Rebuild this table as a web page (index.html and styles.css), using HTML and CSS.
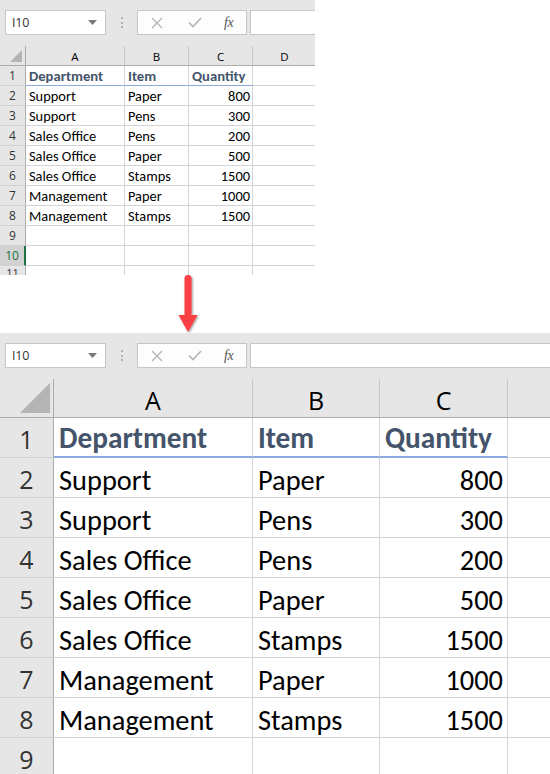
FILE: index.html
```html
<!DOCTYPE html>
<html>
<head>
<meta charset="utf-8">
<link rel="stylesheet" href="styles.css">
</head>
<body>
<div class="page">
  <section class="shot shot--small">
    <div class="toolbar">
      <div class="namebox"><span class="namebox-text">I10</span><svg class="dd" width="9" height="5" viewBox="0 0 9 5"><path d="M0 0h9L4.5 5z" fill="#7a7a7a"/></svg></div>
      <div class="grip"><i></i><i></i><i></i></div>
      <div class="fbtns">
        <svg class="ic-x" width="12" height="12" viewBox="0 0 12 12"><path d="M1 1L11 11M11 1L1 11" stroke="#b4b4b4" stroke-width="1.3" fill="none"/></svg>
        <svg class="ic-ok" width="14" height="11" viewBox="0 0 14 11"><path d="M1 5.5L5 9.5L13 1" stroke="#b4b4b4" stroke-width="1.6" fill="none"/></svg>
        <span class="fx">fx</span>
      </div>
      <div class="finput"></div>
    </div>
    <div class="sheet">
      <div class="corner"><svg class="tri" viewBox="0 0 12 12"><path d="M12 0V12H0z" fill="#b4b4b4"/></svg></div>
      <div class="ch">A</div><div class="ch">B</div><div class="ch">C</div><div class="ch">D</div>

      <div class="rh">1</div><div class="c hd">Department</div><div class="c hd">Item</div><div class="c hd">Quantity</div><div class="c"></div>
      <div class="rh">2</div><div class="c">Support</div><div class="c">Paper</div><div class="c n">800</div><div class="c"></div>
      <div class="rh">3</div><div class="c">Support</div><div class="c">Pens</div><div class="c n">300</div><div class="c"></div>
      <div class="rh">4</div><div class="c">Sales Office</div><div class="c">Pens</div><div class="c n">200</div><div class="c"></div>
      <div class="rh">5</div><div class="c">Sales Office</div><div class="c">Paper</div><div class="c n">500</div><div class="c"></div>
      <div class="rh">6</div><div class="c">Sales Office</div><div class="c">Stamps</div><div class="c n">1500</div><div class="c"></div>
      <div class="rh">7</div><div class="c">Management</div><div class="c">Paper</div><div class="c n">1000</div><div class="c"></div>
      <div class="rh">8</div><div class="c">Management</div><div class="c">Stamps</div><div class="c n">1500</div><div class="c"></div>
      <div class="rh">9</div><div class="c"></div><div class="c"></div><div class="c"></div><div class="c"></div>
      <div class="rh sel">10</div><div class="c"></div><div class="c"></div><div class="c"></div><div class="c"></div>
      <div class="rh rh--cut">11</div><div class="c"></div><div class="c"></div><div class="c"></div><div class="c"></div>
    </div>
  </section>

  <div class="arrow">
    <svg width="30" height="58" viewBox="0 0 30 58">
      <defs>
        <filter id="sh" x="-50%" y="-20%" width="200%" height="150%">
          <feGaussianBlur in="SourceAlpha" stdDeviation="1.2"/>
          <feOffset dx="0.5" dy="1"/>
          <feComponentTransfer><feFuncA type="linear" slope="0.45"/></feComponentTransfer>
          <feMerge><feMergeNode/><feMergeNode in="SourceGraphic"/></feMerge>
        </filter>
      </defs>
      <g filter="url(#sh)">
        <rect x="11.5" y="0" width="7" height="42" rx="3.5" fill="#fb3f45"/>
        <path d="M5.5 40H24.5L15 57z" fill="#fb3f45"/>
      </g>
    </svg>
  </div>

  <section class="shot shot--large">
    <div class="toolbar">
      <div class="namebox"><span class="namebox-text">I10</span><svg class="dd" width="9" height="5" viewBox="0 0 9 5"><path d="M0 0h9L4.5 5z" fill="#7a7a7a"/></svg></div>
      <div class="grip"><i></i><i></i><i></i></div>
      <div class="fbtns">
        <svg class="ic-x" width="12" height="12" viewBox="0 0 12 12"><path d="M1 1L11 11M11 1L1 11" stroke="#b4b4b4" stroke-width="1.3" fill="none"/></svg>
        <svg class="ic-ok" width="14" height="11" viewBox="0 0 14 11"><path d="M1 5.5L5 9.5L13 1" stroke="#b4b4b4" stroke-width="1.6" fill="none"/></svg>
        <span class="fx">fx</span>
      </div>
      <div class="finput"></div>
    </div>
    <div class="sheet">
      <div class="corner"><svg class="tri" viewBox="0 0 12 12"><path d="M12 0V12H0z" fill="#b4b4b4"/></svg></div>
      <div class="ch">A</div><div class="ch">B</div><div class="ch">C</div><div class="ch"></div>

      <div class="rh">1</div><div class="c hd">Department</div><div class="c hd">Item</div><div class="c hd">Quantity</div><div class="c"></div>
      <div class="rh">2</div><div class="c">Support</div><div class="c">Paper</div><div class="c n">800</div><div class="c"></div>
      <div class="rh">3</div><div class="c">Support</div><div class="c">Pens</div><div class="c n">300</div><div class="c"></div>
      <div class="rh">4</div><div class="c">Sales Office</div><div class="c">Pens</div><div class="c n">200</div><div class="c"></div>
      <div class="rh">5</div><div class="c">Sales Office</div><div class="c">Paper</div><div class="c n">500</div><div class="c"></div>
      <div class="rh">6</div><div class="c">Sales Office</div><div class="c">Stamps</div><div class="c n">1500</div><div class="c"></div>
      <div class="rh">7</div><div class="c">Management</div><div class="c">Paper</div><div class="c n">1000</div><div class="c"></div>
      <div class="rh">8</div><div class="c">Management</div><div class="c">Stamps</div><div class="c n">1500</div><div class="c"></div>
      <div class="rh">9</div><div class="c"></div><div class="c"></div><div class="c"></div><div class="c"></div>
    </div>
  </section>
</div>
</body>
</html>
```

FILE: styles.css
```css
* { box-sizing: border-box; }
html, body { margin: 0; padding: 0; background: #ffffff; }
.page { width: 550px; height: 774px; overflow: hidden; }

.shot { background: #e6e6e6; overflow: hidden; }
.shot--small { width: 315px; height: 275px; }
.shot--large { width: 550px; height: 441px; }

/* toolbar */
.toolbar {
  height: 46px;
  display: flex;
  align-items: flex-start;
  padding: 10px 0 0 5px;
}
.namebox {
  width: 101px; height: 25px;
  background: #fff;
  border: 1px solid #c6c6c6;
  display: flex; align-items: center; justify-content: space-between;
  padding: 0 8px 0 6px;
  flex: none;
}
.namebox-text {
  font-family: "Open Sans", "DejaVu Sans", sans-serif;
  font-size: 12.5px; color: #333;
  letter-spacing: -0.2px;
}
.grip {
  width: 31px; height: 25px; flex: none;
  display: flex; flex-direction: column; align-items: center; justify-content: center; gap: 2.5px;
}
.grip i { display: block; width: 2px; height: 2px; background: #b0b0b0; }
.fbtns {
  width: 110px; height: 25px; flex: none;
  background: #fdfdfd;
  border: 1px solid #c6c6c6;
  display: flex; align-items: center;
  padding: 0 0 0 13px;
}
.ic-x { margin-right: 25px; }
.ic-ok { margin-right: 22px; }
.fx {
  font-family: "Liberation Serif", serif;
  font-style: italic; font-size: 14px; color: #555;
  letter-spacing: -0.5px;
}
.finput {
  margin-left: 3px;
  width: 400px; height: 25px; flex: none;
  background: #fff; border: 1px solid #c6c6c6;
}

/* sheet grid */
.sheet {
  display: grid;
  background: #fff;
  font-family: Carlito, Calibri, Lato, sans-serif;
  color: #000;
}
.shot--small .sheet { grid-template-columns: 26px 99px 64px 64px 64px; grid-auto-rows: 20px; grid-template-rows: 20px; width: 317px; }
.shot--large .sheet { grid-template-columns: 54px 199px 127px 128px 128px; grid-auto-rows: 40px; grid-template-rows: 39px; width: 636px; }

.corner, .ch {
  background: #e6e6e6;
  border-bottom: 1px solid #ababab;
  border-right: 1px solid #c8c8c8;
  display: flex; align-items: center; justify-content: center;
  font-family: "Open Sans", "DejaVu Sans", sans-serif;
  color: #000;
}
.corner { border-right-color: #ababab; position: relative; }
.tri { position: absolute; }
.shot--small .tri { width: 12px; height: 12px; right: 3px; bottom: 3px; }
.shot--large .tri { width: 30px; height: 30px; right: 3px; bottom: 4px; }
.shot--small .ch { font-size: 11.5px; padding-top: 2px; }
.shot--large .ch { font-size: 25px; padding-top: 3px; }

.rh {
  background: #e6e6e6;
  border-right: 1px solid #ababab;
  border-bottom: 1px solid #d2d2d2;
  display: flex; align-items: center; justify-content: center;
  font-family: "Open Sans", "DejaVu Sans", sans-serif;
  color: #333;
}
.shot--small .rh { font-size: 12px; }
.shot--small .rh--cut { align-items: flex-start; font-size: 11px; line-height: 14px; }
.shot--large .rh { font-size: 25px; padding-top: 2px; }
.rh.sel { background: #d2d2d2; color: #217346; border-right: 2px solid #217346; }

.c {
  border-right: 1px solid #d4d4d4;
  border-bottom: 1px solid #d4d4d4;
  display: flex; align-items: flex-end;
  white-space: nowrap; overflow: hidden;
}
.shot--small .c { font-size: 14.4px; padding: 0 2px 0 3px; line-height: 18px; }
.shot--large .c { font-size: 28.4px; padding: 0 4px 0 5px; line-height: 33px; }
.shot--small .c.hd { font-size: 14.67px; }
.shot--large .c.hd { font-size: 29.3px; line-height: 36px; }
.c.n { justify-content: flex-end; }
.c.hd { font-weight: bold; color: #44546a; }
.shot--small .c.hd { border-bottom: 1px solid #8ea9db; }
.shot--large .c.hd { border-bottom: 2px solid #8ea9db; }

.arrow { height: 58px; padding-left: 173px; }
.arrow svg { display: block; }
```
